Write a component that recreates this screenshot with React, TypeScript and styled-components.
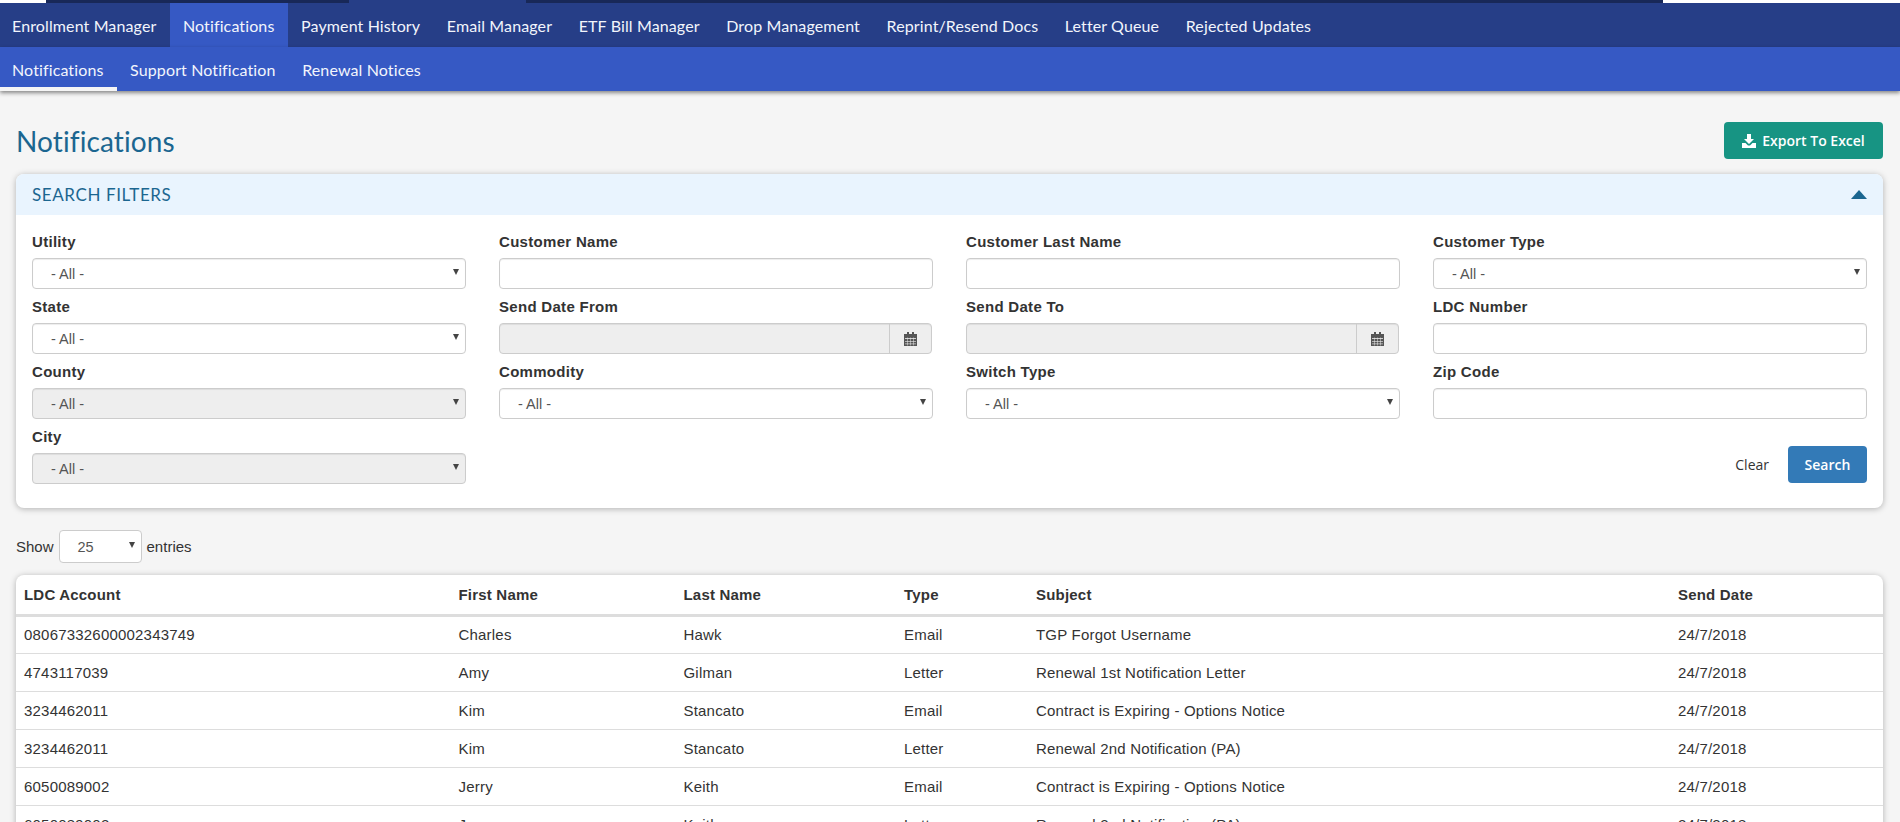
import React from "react";
import styled, { createGlobalStyle } from "styled-components";

const Global = createGlobalStyle`
  html, body { margin: 0; padding: 0; background: #f5f5f5; height: 822px; overflow: hidden; }
  * { box-sizing: border-box; }
  body { font-family: "Liberation Sans", Arial, sans-serif; font-size: 15px; color: #333; }
`;
const brand = `Lato, "Open Sans", sans-serif`;
const btn = `"Open Sans", Lato, sans-serif`;

const TopStrip = styled.div`
  display: flex; height: 3px; background: #fff;
`;
const StripPart = styled.div<{ $w: number; $c: string }>`
  width: ${(p) => p.$w}px; background: ${(p) => p.$c};
`;
const MainNav = styled.nav`
  display: flex; height: 44px; background: #263e87;
`;
const SubNav = styled.nav`
  display: flex; height: 44px; background: #3659c4; box-shadow: 0 2px 4px rgba(0,0,0,.45); position: relative;
`;
const MainTab = styled.a<{ $active?: boolean }>`
  display: flex; align-items: center; padding: 0 13.3px 0 12px; font: 16px ${brand}; letter-spacing: .12px; color: #f2f5fc;
  background: ${(p) => (p.$active ? "#3659c4" : "transparent")};
  & + & { padding-left: 13.3px; }
`;
const SubTab = styled(MainTab)`
  border-bottom: 4px solid ${(p) => (p.$active ? "#f5f5f5" : "transparent")};
  padding-top: 4px;
  background: transparent;
`;
const Page = styled.main`
  padding: 31px 17px 0 16px;
`;
const TitleRow = styled.div`
  display: flex; justify-content: space-between; align-items: center; height: 37px; margin-bottom: 15px;
`;
const Title = styled.h1`
  margin: 0; font: 400 28px ${brand}; letter-spacing: .1px; color: #1b6690;
`;
const ExportBtn = styled.button`
  display: flex; align-items: center; justify-content: center; gap: 6px; width: 159px; height: 37px; border: 0; border-radius: 4px;
  background: #179483; color: #fff; font: 600 14px ${btn}; padding: 0;
`;
const Card = styled.section`
  background: #fff; border-radius: 8px; box-shadow: 0 1px 6px rgba(0,0,0,.28);
`;
const CardHead = styled.div`
  height: 41px; padding: 0 16px; display: flex; align-items: center; justify-content: space-between;
  background: #e9f4fe; border-radius: 8px 8px 0 0; color: #1b6690; font: 400 17px ${brand}; letter-spacing: .6px;
`;
const Caret = styled.span`
  width: 0; height: 0; border-left: 8px solid transparent; border-right: 8px solid transparent; border-bottom: 9px solid #1b6690;
`;
const Filters = styled.div`
  display: grid; grid-template-columns: repeat(4, 1fr); column-gap: 33px; padding: 16px 16px 17px 16px; position: relative;
`;
const Field = styled.div`
  height: 65px; display: flex; flex-direction: column;
`;
const Label = styled.label`
  height: 27px; font-weight: 700; font-size: 15px; letter-spacing: .3px; line-height: 22px; color: #333;
`;
const control = `
  height: 31px; width: 100%; border: 1px solid #ccc; border-radius: 4px; box-shadow: inset 0 1px 1px rgba(0,0,0,.075);
`;
const SelectBox = styled.div<{ $disabled?: boolean }>`
  ${control}
  display: flex; align-items: center; justify-content: space-between; padding: 0 6px 0 18px; color: #555; font-size: 14.5px;
  background: ${(p) => (p.$disabled ? "#eee" : "#fff")};
`;
const Arrow = styled.span`
  width: 0; height: 0; border-left: 3px solid transparent; border-right: 3px solid transparent; border-top: 6px solid #444; margin-top: -3px;
`;
const TextInput = styled.div`
  ${control}
  background: #fff;
`;
const DateGroup = styled.div`
  ${control}
  display: flex; background: #eee; width: calc(100% - 1px);
`;
const DateAddon = styled.div`
  width: 42px; margin-left: auto; border-left: 1px solid #ccc; display: flex; align-items: center; justify-content: center; color: #555;
`;
const Actions = styled.div`
  grid-column: 2 / 5; display: flex; justify-content: flex-end; align-items: flex-start; gap: 19px; height: 65px; padding-top: 20px;
`;
const ClearBtn = styled.a`
  font: 400 14px ${btn}; color: #333; height: 37px; line-height: 37px;
`;
const SearchBtn = styled.button`
  width: 79px; height: 37px; border: 0; border-radius: 4px; background: #337ab7; color: #fff; font: 600 14px ${btn}; padding: 0;
`;
const LengthRow = styled.div`
  display: flex; align-items: center; gap: 4px; height: 33px; margin: 22px 0 12px; color: #333;
`;
const LengthSelect = styled(SelectBox)`
  width: 83px; height: 33px; flex: none; padding: 0 6px 0 18px; box-shadow: none; margin: 0 1px;
`;
const TableCard = styled(Card)`
  overflow: hidden;
  height: 300px;
`;
const Table = styled.table`
  width: 100%; border-collapse: collapse; table-layout: fixed;
`;
const Th = styled.th<{ $w?: number }>`
  ${(p) => (p.$w ? `width: ${p.$w}px;` : "")}
  height: 40px; padding: 0 8px; text-align: left; font-size: 15px; letter-spacing: .2px; border-bottom: 3px solid #ddd; color: #333;
`;
const Td = styled.td`
  height: 38px; padding: 0 8px; border-bottom: 1px solid #ddd; color: #333; font-size: 15px; letter-spacing: .2px;
`;

const nav = ["Enrollment Manager", "Notifications", "Payment History", "Email Manager", "ETF Bill Manager", "Drop Management", "Reprint/Resend Docs", "Letter Queue", "Rejected Updates"];
const sub = ["Notifications", "Support Notification", "Renewal Notices"];
const rows = [
  ["08067332600002343749", "Charles", "Hawk", "Email", "TGP Forgot Username", "24/7/2018"],
  ["4743117039", "Amy", "Gilman", "Letter", "Renewal 1st Notification Letter", "24/7/2018"],
  ["3234462011", "Kim", "Stancato", "Email", "Contract is Expiring - Options Notice", "24/7/2018"],
  ["3234462011", "Kim", "Stancato", "Letter", "Renewal 2nd Notification (PA)", "24/7/2018"],
  ["6050089002", "Jerry", "Keith", "Email", "Contract is Expiring - Options Notice", "24/7/2018"],
  ["6050089002", "Jerry", "Keith", "Letter", "Renewal 2nd Notification (PA)", "24/7/2018"],
];

const CalendarIcon = () => (
  <svg width="13" height="14" viewBox="0 0 13 14" fill="#555">
    <rect x="0" y="2" width="13" height="12" />
    <rect x="3" y="0" width="2" height="3" />
    <rect x="8" y="0" width="2" height="3" />
    <path d="M1 6h11v1H1zM1 9h11v.8H1zM1 11.5h11v.8H1z" fill="#eee" opacity=".8" />
    <path d="M3 5.5h.6v8H3zM6.2 5.5h.6v8h-.6zM9.4 5.5h.6v8h-.6z" fill="#eee" opacity=".8" />
  </svg>
);
const DownloadIcon = () => (
  <svg width="14" height="14" viewBox="0 0 14 14" fill="#fff">
    <path d="M5 0h4v5h3L7 10 2 5h3z" />
    <path d="M0 9h3.500L6 11.500h2L10.500 9H14v5H0z" />
  </svg>
);

const Select = ({ disabled }: { disabled?: boolean }) => (
  <SelectBox $disabled={disabled}>- All -<Arrow /></SelectBox>
);
const DateInput = () => (
  <DateGroup><DateAddon><CalendarIcon /></DateAddon></DateGroup>
);

export default function App() {
  return (
    <>
      <Global />
      <TopStrip>
        <StripPart $w={46} $c="#fff" />
        <StripPart $w={303} $c="#182858" />
        <StripPart $w={177} $c="#263e87" />
        <StripPart $w={1137} $c="#182858" />
      </TopStrip>
      <MainNav>{nav.map((n, i) => <MainTab key={n} $active={i === 1}>{n}</MainTab>)}</MainNav>
      <SubNav>{sub.map((n, i) => <SubTab key={n} $active={i === 0}>{n}</SubTab>)}</SubNav>
      <Page>
        <TitleRow>
          <Title>Notifications</Title>
          <ExportBtn><DownloadIcon />Export To Excel</ExportBtn>
        </TitleRow>
        <Card>
          <CardHead>SEARCH FILTERS<Caret /></CardHead>
          <Filters>
            <Field><Label>Utility</Label><Select /></Field>
            <Field><Label>Customer Name</Label><TextInput /></Field>
            <Field><Label>Customer Last Name</Label><TextInput /></Field>
            <Field><Label>Customer Type</Label><Select /></Field>
            <Field><Label>State</Label><Select /></Field>
            <Field><Label>Send Date From</Label><DateInput /></Field>
            <Field><Label>Send Date To</Label><DateInput /></Field>
            <Field><Label>LDC Number</Label><TextInput /></Field>
            <Field><Label>County</Label><Select disabled /></Field>
            <Field><Label>Commodity</Label><Select /></Field>
            <Field><Label>Switch Type</Label><Select /></Field>
            <Field><Label>Zip Code</Label><TextInput /></Field>
            <Field><Label>City</Label><Select disabled /></Field>
            <Actions><ClearBtn>Clear</ClearBtn><SearchBtn>Search</SearchBtn></Actions>
          </Filters>
        </Card>
        <LengthRow>Show <LengthSelect>25<Arrow /></LengthSelect> entries</LengthRow>
        <TableCard>
          <Table>
            <thead>
              <tr>
                <Th $w={434.5}>LDC Account</Th><Th $w={225}>First Name</Th><Th $w={220.5}>Last Name</Th><Th $w={132}>Type</Th><Th $w={642}>Subject</Th><Th>Send Date</Th>
              </tr>
            </thead>
            <tbody>
              {rows.map((r, i) => <tr key={i}>{r.map((c, j) => <Td key={j}>{c}</Td>)}</tr>)}
            </tbody>
          </Table>
        </TableCard>
      </Page>
    </>
  );
}
